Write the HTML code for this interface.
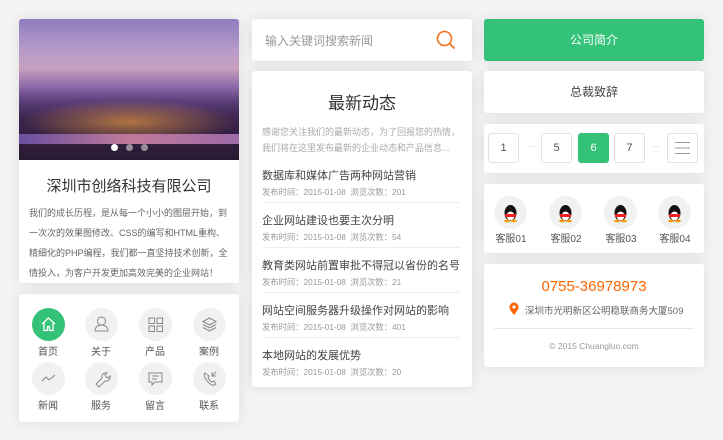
<!DOCTYPE html>
<html><head><meta charset="utf-8"><style>
*{margin:0;padding:0;box-sizing:border-box}
body{width:723px;height:440px;background:#f4f4f4;font-family:"Liberation Sans","Noto Sans CJK SC",sans-serif;position:relative;overflow:hidden;color:#333}
.c{position:absolute;background:#fff;border-radius:3px;box-shadow:0 0 14px rgba(0,0,0,.1)}
.a{position:absolute}
.t{position:absolute;white-space:nowrap}
.ci{position:absolute;width:33px;height:33px;border-radius:50%;background:#f1f1f1}
.lb{position:absolute;font-size:10px;color:#555;width:54px;text-align:center}
.ni{position:absolute;left:10px;width:205px}
.ni b{display:block;font-weight:normal;font-size:11px;color:#444;white-space:nowrap}
.ni i{display:block;font-style:normal;font-size:8.3px;color:#999;margin-top:3px;white-space:nowrap}
.pg{position:absolute;top:133px;width:31px;height:30px;border:1px solid #e3e3e3;border-radius:3px;font-size:11px;color:#555;text-align:center;line-height:28px;background:#fff}
.dt{position:absolute;top:142px;font-size:8px;color:#bbb}
</style></head><body>
<!-- col1 -->
<div class="c" style="left:19px;top:19px;width:220px;height:264px;overflow:hidden">
 <div class="a" style="left:0;top:0;width:220px;height:141px;background:linear-gradient(180deg,#8e7cc0 0%,#b79bc9 22%,#c79fbf 35%,#8b6aa8 48%,#5c3f7b 58%,#3b2450 70%,#2a1a30 100%)"></div>
 <div class="a" style="left:0;top:80px;width:220px;height:45px;background:radial-gradient(ellipse at 50% 50%,rgba(255,170,60,.6),rgba(255,120,40,0) 70%)"></div>
 <div class="a" style="left:0;top:115px;width:220px;height:10px;background:linear-gradient(90deg,#6a4fa0,#c07a9a,#9e6aa8)"></div>
 <div class="a" style="left:92px;top:125px;width:7px;height:7px;border-radius:50%;background:#fff"></div>
 <div class="a" style="left:107px;top:125px;width:7px;height:7px;border-radius:50%;background:rgba(255,255,255,.5)"></div>
 <div class="a" style="left:122px;top:125px;width:7px;height:7px;border-radius:50%;background:rgba(255,255,255,.5)"></div>
 <div class="t" style="left:0;width:220px;text-align:center;top:156px;font-size:15px;color:#333">深圳市创络科技有限公司</div>
 <div class="a" style="left:10px;top:184px;width:204px;font-size:9px;line-height:20px;color:#666">我们的成长历程，是从每一个小小的图层开始，到一次次的效果图修改、CSS的编写和HTML重构、精细化的PHP编程，我们都一直坚持技术创新，全情投入，为客户开发更加高效完美的企业网站！</div>
</div>
<div class="c" style="left:19px;top:294px;width:220px;height:128px">
 <div class="ci" style="left:13px;top:14px;background:#33c278"><svg width="33" height="33" viewBox="0 0 33 33"><path d="M10 16l6.5-6 6.5 6M12 14.5v8h3.5v-4h2v4H21v-8" fill="none" stroke="#fff" stroke-width="1.3"/></svg></div>
 <div class="ci" style="left:66px;top:14px"><svg width="33" height="33"><circle cx="16.5" cy="13" r="4" fill="none" stroke="#888"/><path d="M10 23c0-4 3-6 6.5-6s6.5 2 6.5 6z" fill="none" stroke="#888"/></svg></div>
 <div class="ci" style="left:120px;top:14px"><svg width="33" height="33"><g fill="none" stroke="#888"><rect x="10" y="10" width="5.5" height="5.5"/><rect x="18" y="10" width="5.5" height="5.5"/><rect x="10" y="18" width="5.5" height="5.5"/><rect x="18" y="18" width="5.5" height="5.5"/></g></svg></div>
 <div class="ci" style="left:174px;top:14px"><svg width="33" height="33"><g fill="none" stroke="#888"><path d="M10 13.5l6.5-3.5 6.5 3.5-6.5 3.5z"/><path d="M10 16.5l6.5 3.5 6.5-3.5M10 19.5l6.5 3.5 6.5-3.5"/></g></svg></div>
 <div class="lb" style="left:2px;top:49px">首页</div><div class="lb" style="left:55px;top:49px">关于</div><div class="lb" style="left:109px;top:49px">产品</div><div class="lb" style="left:163px;top:49px">案例</div>
 <div class="ci" style="left:13px;top:68px"><svg width="33" height="33"><path d="M10 19l4-4 3 3 6-5" fill="none" stroke="#888"/></svg></div>
 <div class="ci" style="left:66px;top:68px"><svg width="33" height="33"><path d="M11 22l6-6a4 4 0 0 1 5-5l-2 2 1 2 2 1 2-2a4 4 0 0 1-5 5l-6 6z" fill="none" stroke="#888"/></svg></div>
 <div class="ci" style="left:120px;top:68px"><svg width="33" height="33"><path d="M10 11h13v9h-7l-3 3v-3h-3z M13 14h7M13 17h5" fill="none" stroke="#888"/></svg></div>
 <div class="ci" style="left:174px;top:68px"><svg width="33" height="33"><path d="M12 11c-2 2 0 6 3 9s6 4 8 2l-2-3-2 1c-2-1-3-2-4-4l1-2z M19 10v4h4M19 14l4-4" fill="none" stroke="#888"/></svg></div>
 <div class="lb" style="left:2px;top:103px">新闻</div><div class="lb" style="left:55px;top:103px">服务</div><div class="lb" style="left:109px;top:103px">留言</div><div class="lb" style="left:163px;top:103px">联系</div>
</div>
<!-- col2 -->
<div class="c" style="left:252px;top:19px;width:220px;height:42px">
 <div class="t" style="left:13px;top:13px;font-size:12px;color:#999">输入关键词搜索新闻</div>
 <svg class="a" style="left:183px;top:10px" width="22" height="22"><circle cx="9.5" cy="9.5" r="7" fill="none" stroke="#f37321" stroke-width="1.6"/><path d="M14.5 14.5l5 5" stroke="#f37321" stroke-width="1.8"/></svg>
</div>
<div class="c" style="left:252px;top:71px;width:220px;height:316px">
 <div class="t" style="left:0;width:220px;text-align:center;top:18px;font-size:17px;color:#333">最新动态</div>
 <div class="a" style="left:10px;top:53px;width:205px;font-size:9px;line-height:16px;color:#aaa">感谢您关注我们的最新动态，为了回报您的热情，我们将在这里发布最新的企业动态和产品信息...</div>
 <div class="ni" style="top:96px"><b>数据库和媒体广告两种网站营销</b><i>发布时间：2015-01-08 &nbsp;浏览次数：201</i></div>
 <div class="a" style="left:10px;top:131px;width:198px;height:1px;background:#eee"></div>
 <div class="ni" style="top:141px"><b>企业网站建设也要主次分明</b><i>发布时间：2015-01-08 &nbsp;浏览次数：54</i></div>
 <div class="a" style="left:10px;top:176px;width:198px;height:1px;background:#eee"></div>
 <div class="ni" style="top:186px"><b>教育类网站前置审批不得冠以省份的名号</b><i>发布时间：2015-01-08 &nbsp;浏览次数：21</i></div>
 <div class="a" style="left:10px;top:221px;width:198px;height:1px;background:#eee"></div>
 <div class="ni" style="top:231px"><b>网站空间服务器升级操作对网站的影响</b><i>发布时间：2015-01-08 &nbsp;浏览次数：401</i></div>
 <div class="a" style="left:10px;top:266px;width:198px;height:1px;background:#eee"></div>
 <div class="ni" style="top:276px"><b>本地网站的发展优势</b><i>发布时间：2015-01-08 &nbsp;浏览次数：20</i></div>
</div>
<!-- col3 -->
<div class="c" style="left:484px;top:19px;width:220px;height:42px;background:#33c278;text-align:center;line-height:42px;color:#fff;font-size:12px">公司简介</div>
<div class="c" style="left:484px;top:71px;width:220px;height:42px;text-align:center;line-height:42px;color:#444;font-size:12px">总裁致辞</div>
<div class="c" style="left:484px;top:124px;width:220px;height:49px"></div>
<div class="pg" style="left:488px">1</div><div class="dt" style="left:527px">···</div>
<div class="pg" style="left:541px">5</div>
<div class="pg" style="left:578px;background:#33c278;border-color:#33c278;color:#fff">6</div>
<div class="pg" style="left:614px">7</div><div class="dt" style="left:652px">···</div>
<div class="pg" style="left:667px"><svg width="29" height="28"><path d="M7 8.5h15M7 14h15M7 19.5h15" stroke="#999"/></svg></div>
<div class="c" style="left:484px;top:184px;width:220px;height:69px">
 <div class="ci" style="left:10px;top:12px"></div><div class="ci" style="left:65px;top:12px"></div><div class="ci" style="left:120px;top:12px"></div><div class="ci" style="left:174px;top:12px"></div>
 <svg class="a" style="left:0;top:12px" width="220" height="33"><g id="q"><ellipse cx="26.5" cy="17" rx="6" ry="8" fill="#111"/><ellipse cx="26.5" cy="20" rx="4" ry="4.5" fill="#fff"/><rect x="21" y="18" width="11" height="3" fill="#e22"/><ellipse cx="23" cy="25" rx="3" ry="1.3" fill="#f90"/><ellipse cx="30" cy="25" rx="3" ry="1.3" fill="#f90"/></g>
 <use href="#q" x="55"/><use href="#q" x="110"/><use href="#q" x="164"/></svg>
 <div class="lb" style="left:0;top:46px">客服01</div><div class="lb" style="left:55px;top:46px">客服02</div><div class="lb" style="left:110px;top:46px">客服03</div><div class="lb" style="left:164px;top:46px">客服04</div>
</div>
<div class="c" style="left:484px;top:264px;width:220px;height:103px">
 <div class="t" style="left:0;width:220px;text-align:center;top:14px;font-size:15px;color:#f60">0755-36978973</div>
 <svg class="a" style="left:25px;top:38px" width="10" height="14"><path d="M5 13C1 8 0.5 6.5 0.5 5a4.5 4.5 0 0 1 9 0c0 1.5-.5 3-4.5 8z" fill="#f60"/><circle cx="5" cy="5" r="1.6" fill="#fff"/></svg>
 <div class="t" style="left:41px;top:39px;font-size:9.5px;color:#666">深圳市光明新区公明稳联商务大厦509</div>
 <div class="a" style="left:10px;top:64px;width:200px;height:1px;background:#e8e8e8"></div>
 <div class="t" style="left:0;width:220px;text-align:center;top:77px;font-size:8.5px;color:#999">© 2015 Chuangluo.com</div>
</div>
</body></html>
